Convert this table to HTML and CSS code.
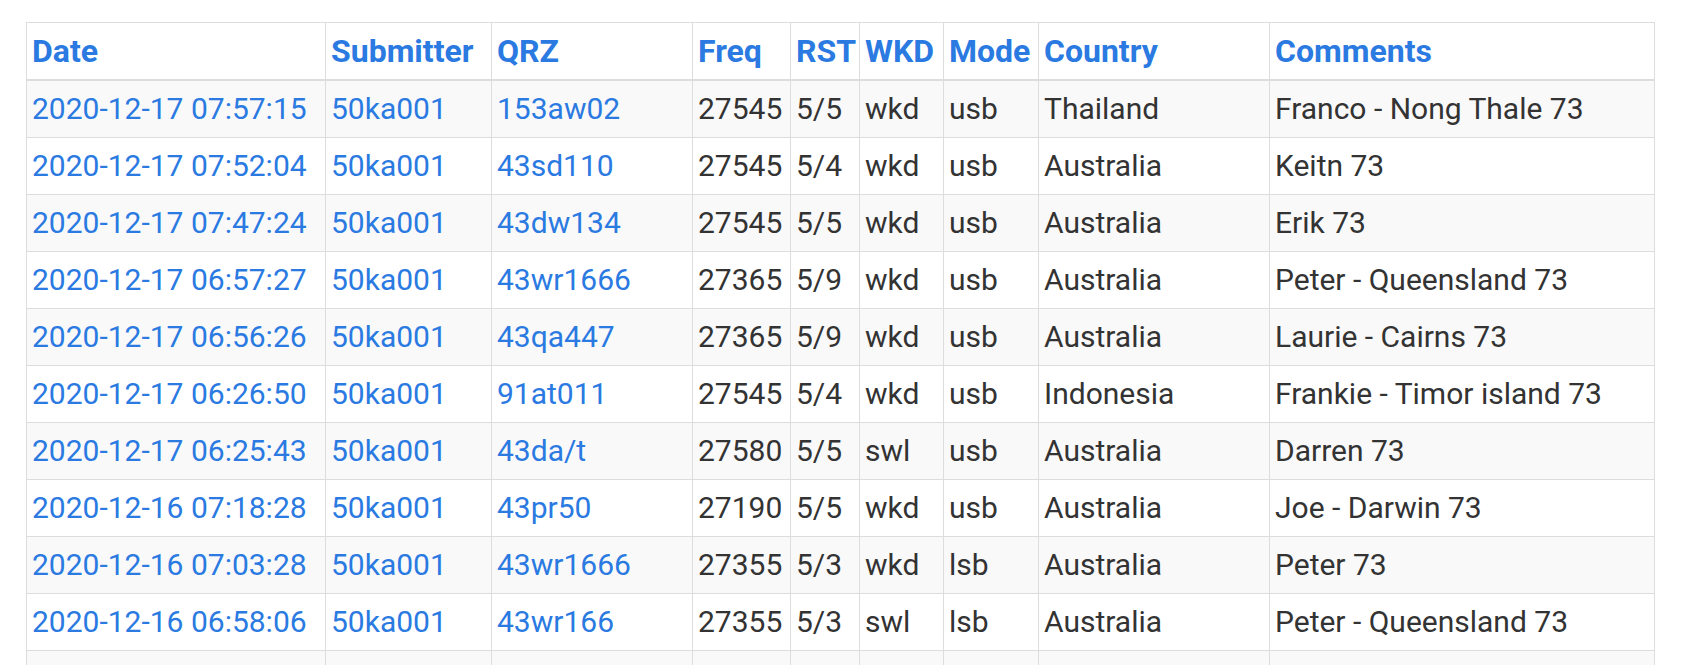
FILE: index.html
```html
<!DOCTYPE html>
<html lang="en">
<head>
<meta charset="utf-8">
<title>Log</title>
<link rel="stylesheet" href="styles.css">
</head>
<body>
<div class="page">
<table class="log">
<colgroup>
<col class="c-date"><col class="c-sub"><col class="c-qrz"><col class="c-freq"><col class="c-rst"><col class="c-wkd"><col class="c-mode"><col class="c-country"><col class="c-comments">
</colgroup>
<thead>
<tr><th><a href="#">Date</a></th><th><a href="#">Submitter</a></th><th><a href="#">QRZ</a></th><th><a href="#">Freq</a></th><th><a href="#">RST</a></th><th><a href="#">WKD</a></th><th><a href="#">Mode</a></th><th><a href="#">Country</a></th><th><a href="#">Comments</a></th></tr>
</thead>
<tbody>
<tr><td><a href="#">2020-12-17 07:57:15</a></td><td><a href="#">50ka001</a></td><td><a href="#">153aw02</a></td><td>27545</td><td>5/5</td><td>wkd</td><td>usb</td><td>Thailand</td><td>Franco - Nong Thale 73</td></tr>
<tr><td><a href="#">2020-12-17 07:52:04</a></td><td><a href="#">50ka001</a></td><td><a href="#">43sd110</a></td><td>27545</td><td>5/4</td><td>wkd</td><td>usb</td><td>Australia</td><td>Keitn 73</td></tr>
<tr><td><a href="#">2020-12-17 07:47:24</a></td><td><a href="#">50ka001</a></td><td><a href="#">43dw134</a></td><td>27545</td><td>5/5</td><td>wkd</td><td>usb</td><td>Australia</td><td>Erik 73</td></tr>
<tr><td><a href="#">2020-12-17 06:57:27</a></td><td><a href="#">50ka001</a></td><td><a href="#">43wr1666</a></td><td>27365</td><td>5/9</td><td>wkd</td><td>usb</td><td>Australia</td><td>Peter - Queensland 73</td></tr>
<tr><td><a href="#">2020-12-17 06:56:26</a></td><td><a href="#">50ka001</a></td><td><a href="#">43qa447</a></td><td>27365</td><td>5/9</td><td>wkd</td><td>usb</td><td>Australia</td><td>Laurie - Cairns 73</td></tr>
<tr><td><a href="#">2020-12-17 06:26:50</a></td><td><a href="#">50ka001</a></td><td><a href="#">91at011</a></td><td>27545</td><td>5/4</td><td>wkd</td><td>usb</td><td>Indonesia</td><td>Frankie - Timor island 73</td></tr>
<tr><td><a href="#">2020-12-17 06:25:43</a></td><td><a href="#">50ka001</a></td><td><a href="#">43da/t</a></td><td>27580</td><td>5/5</td><td>swl</td><td>usb</td><td>Australia</td><td>Darren 73</td></tr>
<tr><td><a href="#">2020-12-16 07:18:28</a></td><td><a href="#">50ka001</a></td><td><a href="#">43pr50</a></td><td>27190</td><td>5/5</td><td>wkd</td><td>usb</td><td>Australia</td><td>Joe - Darwin 73</td></tr>
<tr><td><a href="#">2020-12-16 07:03:28</a></td><td><a href="#">50ka001</a></td><td><a href="#">43wr1666</a></td><td>27355</td><td>5/3</td><td>wkd</td><td>lsb</td><td>Australia</td><td>Peter 73</td></tr>
<tr><td><a href="#">2020-12-16 06:58:06</a></td><td><a href="#">50ka001</a></td><td><a href="#">43wr166</a></td><td>27355</td><td>5/3</td><td>swl</td><td>lsb</td><td>Australia</td><td>Peter - Queensland 73</td></tr>
<tr class="tail"><td></td><td></td><td></td><td></td><td></td><td></td><td></td><td></td><td></td></tr>
</tbody>
</table>
</div>
</body>
</html>
```
FILE: styles.css
```css
html, body {
  margin: 0;
  padding: 0;
  background: #fff;
}
.page {
  padding: 22px 0 0 26px;
  font-family: Roboto, "Noto Sans", Arial, sans-serif;
  font-size: 30px;
  color: #333;
}
.log {
  border-collapse: collapse;
  border-spacing: 0;
  table-layout: fixed;
  width: 1629px;
  border: 1px solid #ddd;
}
.log a {
  color: #2a7ae2;
  text-decoration: none;
}
.log th,
.log td {
  border: 1px solid #ddd;
  padding: 8px 5px;
  line-height: 40px;
  text-align: left;
  white-space: nowrap;
  overflow: hidden;
}
.log th {
  font-size: 32px;
  font-weight: 700;
  border-bottom: 2px solid #ddd;
}
.log tbody tr:nth-child(odd) td {
  background: #f9f9f9;
}
.log .tail td {
  height: 40px;
}
.c-date { width: 299px; }
.c-sub { width: 166px; }
.c-qrz { width: 201px; }
.c-freq { width: 98px; }
.c-rst { width: 69px; }
.c-wkd { width: 84px; }
.c-mode { width: 95px; }
.c-country { width: 231px; }
.c-comments { width: 385px; }
```
